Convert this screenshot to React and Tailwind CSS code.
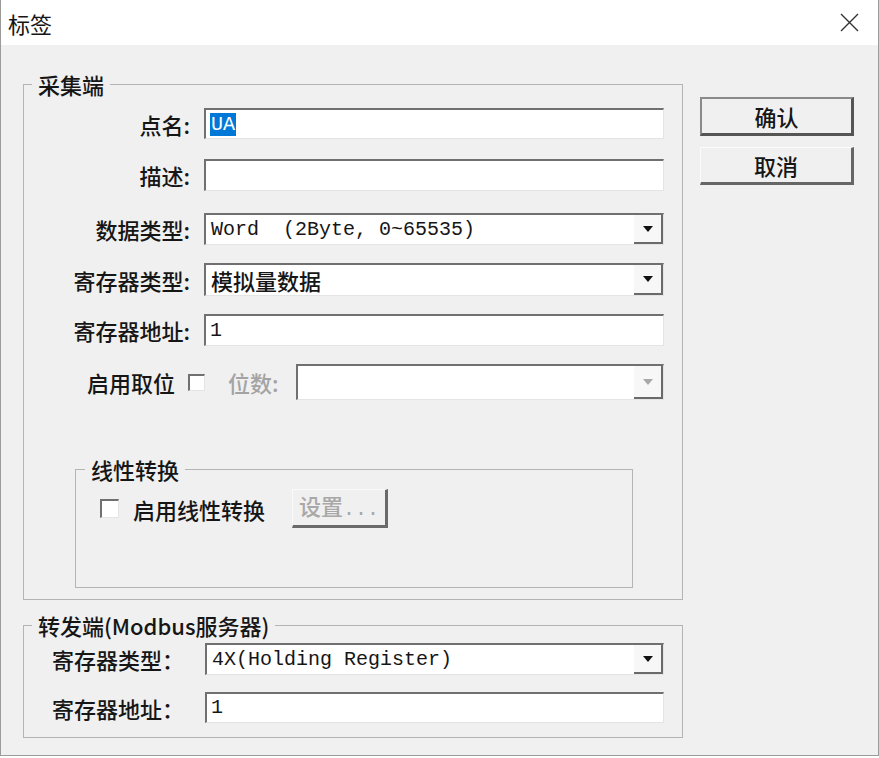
import React from 'react';

const sunken =
  'border-t-2 border-l-2 border-b border-r border-t-[#707070] border-l-[#707070] border-b-[#e4e4e4] border-r-[#e4e4e4] bg-white';

function Arrow({ disabled }) {
  return (
    <div className="w-[29px] h-full flex items-center justify-center bg-[#f7f7f7] border-r-2 border-b-2 border-r-[#6a6a6a] border-b-[#6a6a6a]">
      <svg width="10" height="6" viewBox="0 0 10 6">
        <path d="M0 0 H10 L5 6 Z" fill={disabled ? '#a8a8a8' : '#111'} />
      </svg>
    </div>
  );
}

function Select({ children, disabled, className = '' }) {
  return (
    <div className={`flex-1 h-full flex items-stretch ${sunken} ${className}`}>
      <div className="flex-1 flex items-center pl-[5px] overflow-hidden whitespace-pre">{children}</div>
      <Arrow disabled={disabled} />
    </div>
  );
}

function Input({ children }) {
  return (
    <div className={`flex-1 h-full flex items-center pl-[4px] whitespace-pre ${sunken}`}>{children}</div>
  );
}

function Check({ size = 'w-[18px] h-[18px]' }) {
  return <div className={`${size} ${sunken}`} />;
}

const mono = "font-['Liberation_Mono','Noto_Sans_CJK_SC',monospace] text-[20px]";

function Row({ label, mt, h = 'h-[32px]', children }) {
  return (
    <div className={`flex items-center ${h} ${mt}`}>
      <div className="w-[166px] text-right whitespace-nowrap">{label}</div>
      <div className="ml-[14px] flex-1 h-full flex">{children}</div>
    </div>
  );
}

export default function App() {
  return (
    <div className="w-[879px] h-[756px] flex flex-col bg-[#f0f0f0] border-l border-r border-b border-[#9b9b9b] font-['Noto_Sans_CJK_SC',sans-serif] font-medium text-[22px] leading-[24px] text-[#161616]">
      {/* title bar */}
      <div className="h-[45px] shrink-0 bg-white flex items-center justify-between pl-[7px] pr-[19px]">
        <span className="font-normal">标签</span>
        <svg width="19" height="19" viewBox="0 0 19 19">
          <path d="M1 1 L18 18 M18 1 L1 18" stroke="#333" strokeWidth="1.4" />
        </svg>
      </div>

      <div className="flex flex-1">
        <div className="ml-[22px] w-[660px] flex flex-col">
          {/* 采集端 */}
          <fieldset className="mt-[27px] h-[528px] border border-[#b4b4b4] flex flex-col">
            <legend className="ml-[8px] px-[6px]">采集端</legend>
            <div className="flex flex-col pt-[12px] pr-[18px]">
              <Row label="点名:" mt="" h="h-[31px]">
                <Input>
                  <span className={`${mono} bg-[#0078d7] text-white leading-[23px] px-[1px]`}>UA</span>
                </Input>
              </Row>
              <Row label="描述:" mt="mt-[20px]">
                <Input />
              </Row>
              <Row label="数据类型:" mt="mt-[22px]">
                <Select>
                  <span className={mono}>Word  (2Byte, 0~65535)</span>
                </Select>
              </Row>
              <Row label="寄存器类型:" mt="mt-[18px]" h="h-[33px]">
                <Select>模拟量数据</Select>
              </Row>
              <Row label="寄存器地址:" mt="mt-[18px]">
                <Input>
                  <span className={mono}>1</span>
                </Input>
              </Row>
              <div className="flex items-center h-[36px] mt-[18px]">
                <div className="w-[151px] text-right whitespace-nowrap">启用取位</div>
                <div className="ml-[13px]">
                  <Check size="w-[17px] h-[17px]" />
                </div>
                <div className="ml-[23px] text-[#a3a3a3] whitespace-nowrap">位数:</div>
                <div className="ml-[17px] flex-1 h-full flex">
                  <Select disabled />
                </div>
              </div>
            </div>

            {/* 线性转换 */}
            <fieldset className="ml-[51px] mr-[49px] mt-[57px] h-[131px] border border-[#b4b4b4]">
              <legend className="ml-[9px] px-[6px]">线性转换</legend>
              <div className="flex items-center pt-[8px] pl-[24px]">
                <Check size="w-[19px] h-[19px]" />
                <span className="ml-[14px]">启用线性转换</span>
                <div className="ml-[27px] w-[96px] h-[39px] flex items-center justify-center text-[#a8a8a8] bg-[#f0f0f0] border-t border-l border-t-[#fafafa] border-l-[#fafafa] border-b-[3px] border-r-[3px] border-b-[#6a6a6a] border-r-[#6a6a6a]">
                  <span>
                    设置<span className={mono}>...</span>
                  </span>
                </div>
              </div>
            </fieldset>
          </fieldset>

          {/* 转发端 */}
          <fieldset className="mt-[13px] h-[125px] border border-[#b4b4b4]">
            <legend className="ml-[8px] px-[6px] whitespace-pre">转发端(Modbus服务器)</legend>
            <div className="flex flex-col pt-[6px] pl-[28px] pr-[18px]">
              <div className="flex items-center h-[32px]">
                <div className="w-[153px] whitespace-nowrap">寄存器类型：</div>
                <div className="flex-1 h-full flex">
                  <Select>
                    <span className={mono}>4X(Holding Register)</span>
                  </Select>
                </div>
              </div>
              <div className="flex items-center h-[31px] mt-[17px]">
                <div className="w-[153px] whitespace-nowrap">寄存器地址：</div>
                <div className="flex-1 h-full flex">
                  <Input>
                    <span className={mono}>1</span>
                  </Input>
                </div>
              </div>
            </div>
          </fieldset>
        </div>

        {/* buttons */}
        <div className="ml-[17px] flex flex-col">
          <div className="mt-[52px] w-[154px] h-[39px] flex items-center justify-center bg-[#f0f0f0] border-t-2 border-l-2 border-t-[#8a8a8a] border-l-[#8a8a8a] border-b-[3px] border-r-[3px] border-b-[#555] border-r-[#555]">
            确认
          </div>
          <div className="mt-[11px] w-[154px] h-[38px] flex items-center justify-center bg-[#f0f0f0] border-t border-l border-t-[#fbfbfb] border-l-[#fbfbfb] border-b-[3px] border-r-[3px] border-b-[#666] border-r-[#666]">
            取消
          </div>
        </div>
      </div>
    </div>
  );
}
